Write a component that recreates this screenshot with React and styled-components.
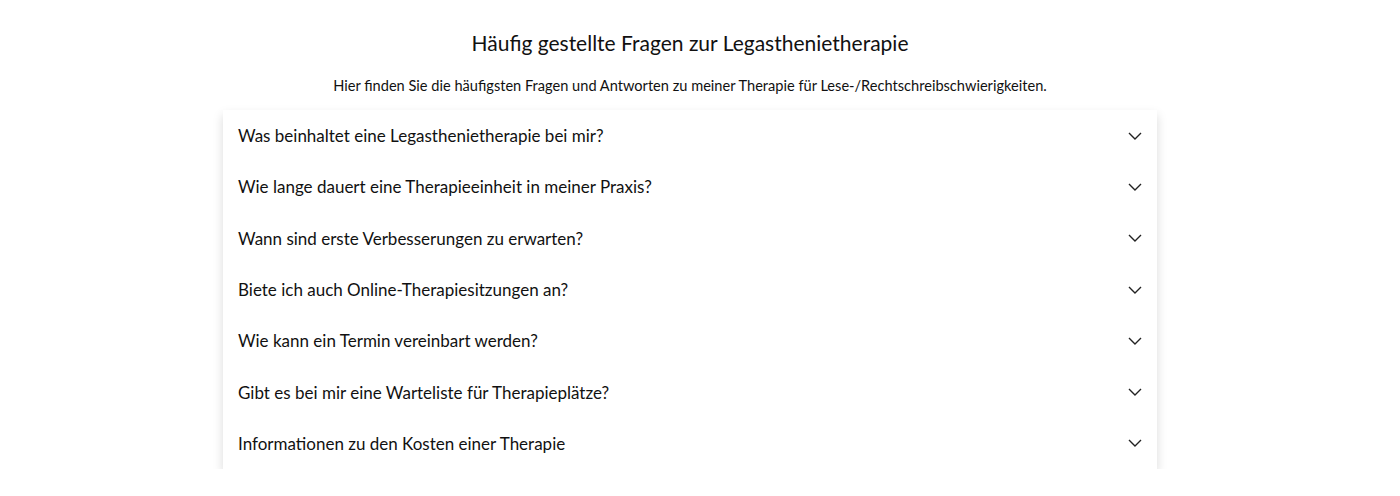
import React from 'react';
import styled, { createGlobalStyle } from 'styled-components';

const GlobalStyle = createGlobalStyle`
  body {
    margin: 0;
    background: #fff;
    font-family: Lato, "Open Sans", sans-serif;
    color: #111;
  }
`

const Section = styled.section`
  display: flex;
  flex-direction: column;
  align-items: center;
  padding: 28px 20px 0 0;
`

const Title = styled.h2`
  margin: 0;
  font-size: 21px;
  font-weight: 400;
  line-height: 30px;
  color: #111;
`

const Lead = styled.p`
  margin: 18px 0 0;
  font-size: 14.6px;
  font-weight: 400;
  line-height: 20px;
  color: #111;
`

const Card = styled.div`
  width: 934px;
  margin-top: 14px;
  background: #fff;
  box-shadow: 0 5px 10px rgba(0, 0, 0, 0.15);
  display: flex;
  flex-direction: column;
`

const Row = styled.button`
  display: flex;
  align-items: center;
  justify-content: space-between;
  height: 51.3px;
  padding: 0 15px;
  border: none;
  background: transparent;
  font-family: inherit;
  font-size: 17px;
  color: #111;
  text-align: left;
  cursor: pointer;
`

const Chevron = () => (
  <svg width="14" height="8" viewBox="0 0 14 8" fill="none">
    <path d="M1 1l6 6 6-6" stroke="#222" strokeWidth="1.4" />
  </svg>
)

const questions = [
  'Was beinhaltet eine Legasthenietherapie bei mir?',
  'Wie lange dauert eine Therapieeinheit in meiner Praxis?',
  'Wann sind erste Verbesserungen zu erwarten?',
  'Biete ich auch Online-Therapiesitzungen an?',
  'Wie kann ein Termin vereinbart werden?',
  'Gibt es bei mir eine Warteliste für Therapieplätze?',
  'Informationen zu den Kosten einer Therapie',
]

const App = () => (
  <>
    <GlobalStyle />
    <Section>
      <Title>Häufig gestellte Fragen zur Legasthenietherapie</Title>
      <Lead>Hier finden Sie die häufigsten Fragen und Antworten zu meiner Therapie für Lese-/Rechtschreibschwierigkeiten.</Lead>
      <Card>
        {questions.map(q => (
          <Row key={q}>
            <span>{q}</span>
            <Chevron />
          </Row>
        ))}
      </Card>
    </Section>
  </>
)

export default App
